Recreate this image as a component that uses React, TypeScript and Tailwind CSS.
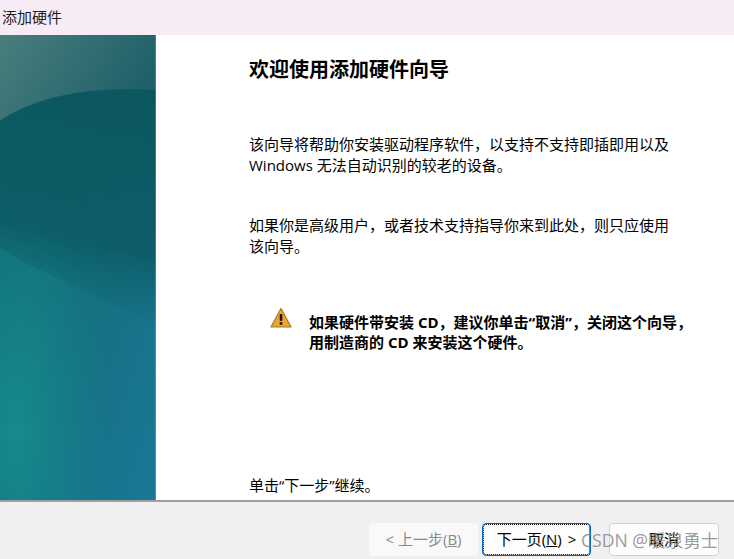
const cjk = "font-['Open_Sans','Noto_Sans_CJK_SC',sans-serif]";

function SidePanel() {
  return (
    <svg viewBox="0 0 156 466" preserveAspectRatio="none" className="block h-full w-[156px]">
      <defs>
        <linearGradient id="base" x1="0" y1="0" x2="1" y2="1">
          <stop offset="0" stopColor="#0f6a6c" />
          <stop offset="0.55" stopColor="#156f7e" />
          <stop offset="1" stopColor="#1b7797" />
        </linearGradient>
        <linearGradient id="top" x1="0" y1="0" x2="1" y2="0.4">
          <stop offset="0" stopColor="#4b7e7d" />
          <stop offset="1" stopColor="#1f6069" />
        </linearGradient>
        <linearGradient id="dark" gradientUnits="userSpaceOnUse" x1="120" y1="50" x2="65" y2="270">
          <stop offset="0" stopColor="#0b5760" />
          <stop offset="0.7" stopColor="#0b5a64" stopOpacity="0.85" />
          <stop offset="0.88" stopColor="#0b5f6b" stopOpacity="0.35" />
          <stop offset="1" stopColor="#0b5f6b" stopOpacity="0" />
        </linearGradient>
        <radialGradient id="glow" cx="0.1" cy="0.85" r="0.6">
          <stop offset="0" stopColor="#15918f" stopOpacity="0.85" />
          <stop offset="0.6" stopColor="#15878f" stopOpacity="0.4" />
          <stop offset="1" stopColor="#15878f" stopOpacity="0" />
        </radialGradient>
      </defs>
      <rect width="156" height="466" fill="url(#base)" />
      <rect width="156" height="466" fill="url(#glow)" />
      <path d="M0 0H156V55C90 51 35 62 0 86Z" fill="url(#top)" />
      <path d="M0 86C35 62 90 51 156 55V290C110 270 70 250 33 232C20 226 10 220 0 213Z" fill="url(#dark)" />
      <rect x="155" width="1" height="466" fill="#ffffff" fillOpacity="0.2" />
    </svg>
  );
}

function WarningIcon() {
  return (
    <svg width="22" height="22" viewBox="0 0 22 22" className="shrink-0">
      <path d="M11 1.5L21 20H1Z" fill="#e9a92f" stroke="#a9752a" strokeWidth="1.2" strokeLinejoin="round" />
      <rect x="9.7" y="7" width="2.6" height="7" rx="1" fill="#1d1608" />
      <rect x="9.7" y="15.2" width="2.6" height="2.6" fill="#1d1608" />
    </svg>
  );
}

export default function App() {
  return (
    <div className={`relative flex h-[559px] w-[734px] flex-col overflow-hidden bg-white text-black ${cjk}`}>
      <div className="flex h-[35px] shrink-0 items-center bg-[#f7ecf5] pl-[2px] text-[15px] text-[#1c1c1c]">添加硬件</div>

      <div className="flex h-[465px] shrink-0">
        <SidePanel />
        <div className="flex flex-1 flex-col pl-[93px]">
          <h1 className="mt-[21px] text-[20px] leading-[28px] font-bold">欢迎使用添加硬件向导</h1>
          <p className="mt-[50px] text-[15px] leading-[21px]">
            该向导将帮助你安装驱动程序软件，以支持不支持即插即用以及
            <br />
            Windows 无法自动识别的较老的设备。
          </p>
          <p className="mt-[39px] text-[15px] leading-[21px]">
            如果你是高级用户，或者技术支持指导你来到此处，则只应使用
            <br />
            该向导。
          </p>
          <div className="mt-[50px] ml-[21px] flex items-start gap-[17px]">
            <WarningIcon />
            <p className="mt-[5px] text-[15px] leading-[20px] font-bold whitespace-nowrap">
              如果硬件带安装 CD，建议你单击“取消”，关闭这个向导，
              <br />
              用制造商的 CD 来安装这个硬件。
            </p>
          </div>
          <p className="mt-auto mb-[4px] text-[15px] leading-[21px]">单击“下一步”继续。</p>
        </div>
      </div>

      <div className="flex flex-1 items-start justify-end border-t-2 border-[#a0a0a0] bg-[#f0f0f0] pt-[21px] pr-[15px]">
        <button className="flex h-[33px] w-[109px] items-center justify-center rounded-[4px] bg-[#f9f9f9] text-[15px] text-[#8a8a8a]">
          &lt; 上一步(<span className="underline">B</span>)
        </button>
        <button className="ml-[4px] flex h-[33px] w-[109px] items-center justify-center gap-[6px] rounded-[4px] border border-[#0067c0] bg-[#fdfdfd] text-[15px] outline-1 -outline-offset-2 outline-black outline-dotted">
          <span>下一页(<span className="underline">N</span>)</span>
          <span>&gt;</span>
        </button>
        <button className="ml-[18px] flex h-[33px] w-[110px] items-center justify-center rounded-[4px] border border-[#d0d0d0] bg-[#fdfdfd] text-[15px]">
          取消
        </button>
      </div>

      <div className="absolute top-[529px] left-[581px] text-[17.6px] leading-[22px] whitespace-nowrap text-[#808080]/80">CSDN @暖泉勇士</div>
    </div>
  );
}
